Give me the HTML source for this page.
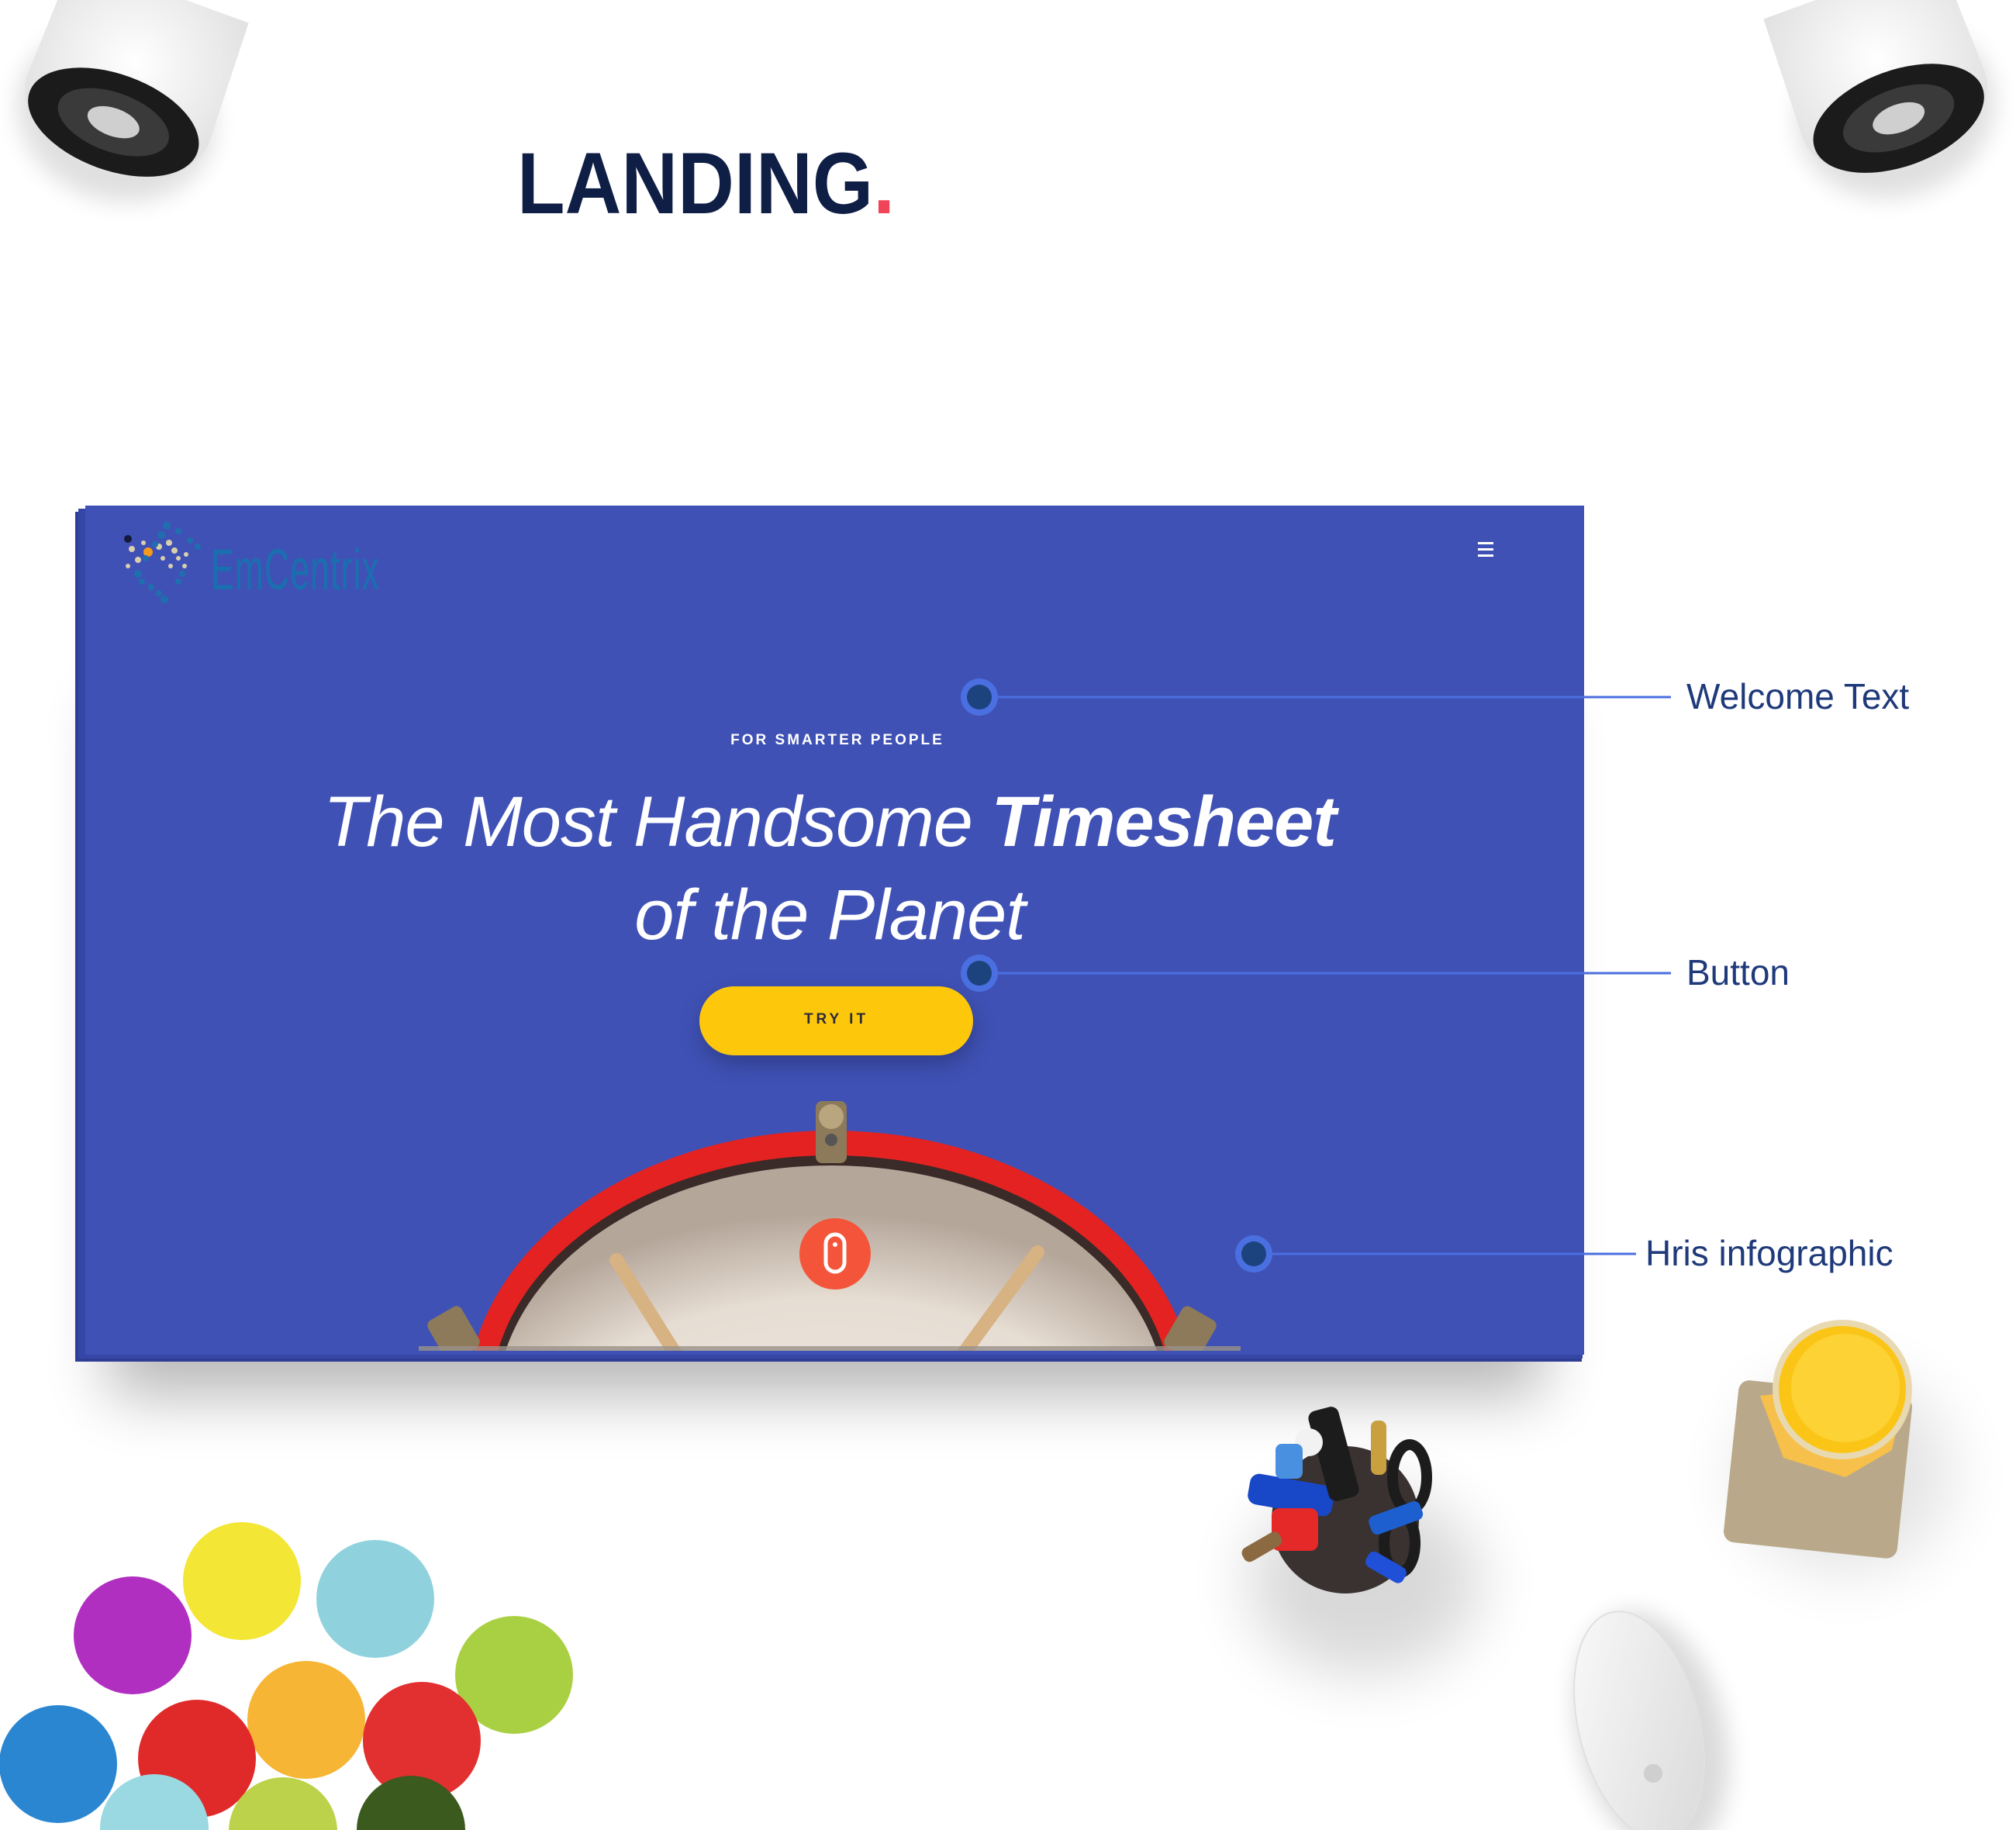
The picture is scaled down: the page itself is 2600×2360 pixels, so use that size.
<!DOCTYPE html>
<html><head><meta charset="utf-8"><style>
html,body{margin:0;padding:0;background:#fff;}
body{width:2600px;height:2360px;position:relative;overflow:hidden;font-family:"Liberation Sans",sans-serif;}
.abs{position:absolute;}
</style></head><body>
<svg class="abs" style="left:0;top:0" width="2600" height="2360" viewBox="0 0 2600 2360">
<defs>
<filter id="blur40" x="-50%" y="-50%" width="200%" height="200%"><feGaussianBlur stdDeviation="40"/></filter>
<filter id="blur15" x="-50%" y="-50%" width="200%" height="200%"><feGaussianBlur stdDeviation="15"/></filter>
<radialGradient id="head" cx="50%" cy="80%" r="70%"><stop offset="0" stop-color="#f3efe8"/><stop offset="0.75" stop-color="#e6ddd3"/><stop offset="1" stop-color="#b5a69a"/></radialGradient>
<radialGradient id="spk" cx="50%" cy="40%" r="60%"><stop offset="0" stop-color="#fff"/><stop offset="1" stop-color="#e2e2e2"/></radialGradient>
<linearGradient id="mouse" x1="0" y1="0" x2="1" y2="1"><stop offset="0" stop-color="#fbfbfb"/><stop offset="1" stop-color="#d8d8d8"/></linearGradient>
</defs>
<rect x="140" y="900" width="1850" height="900" fill="#000" opacity="0.28" filter="url(#blur40)"/>
<g transform="translate(160,120) rotate(20)">
 <ellipse cx="0" cy="30" rx="130" ry="110" fill="#000" opacity="0.12" filter="url(#blur15)"/>
 <path d="M-120,-140 L120,-140 L125,20 A125,85 0 0 1 -125,20 Z" fill="url(#spk)"/>
 <ellipse cx="0" cy="40" rx="115" ry="62" fill="#1b1b1b"/>
 <ellipse cx="0" cy="40" rx="75" ry="38" fill="#3a3a3a"/>
 <ellipse cx="0" cy="40" rx="35" ry="18" fill="#cfcfcf"/>
</g>
<g transform="translate(2435,115) rotate(-20)">
 <ellipse cx="0" cy="30" rx="130" ry="110" fill="#000" opacity="0.12" filter="url(#blur15)"/>
 <path d="M-120,-140 L120,-140 L125,20 A125,85 0 0 1 -125,20 Z" fill="url(#spk)"/>
 <ellipse cx="0" cy="40" rx="115" ry="62" fill="#1b1b1b"/>
 <ellipse cx="0" cy="40" rx="75" ry="38" fill="#3a3a3a"/>
 <ellipse cx="0" cy="40" rx="35" ry="18" fill="#cfcfcf"/>
</g>
<rect x="97" y="660" width="1943" height="1096" fill="#2f3e95"/>
<rect x="101" y="656" width="1940" height="1096" fill="#3646a6"/>
<rect x="110" y="652" width="1933" height="1095" fill="#3f51b5"/>
<clipPath id="pc"><rect x="110" y="652" width="1933" height="1090"/></clipPath>
<g clip-path="url(#pc)">
 <ellipse cx="1072" cy="1810" rx="470" ry="352" fill="#e52222"/>
 <ellipse cx="1072" cy="1810" rx="440" ry="320" fill="#3a2a28"/>
 <ellipse cx="1072" cy="1815" rx="432" ry="312" fill="url(#head)"/>
 <line x1="795" y1="1625" x2="880" y2="1760" stroke="#d7b283" stroke-width="18" stroke-linecap="round"/>
 <line x1="1338" y1="1615" x2="1232" y2="1760" stroke="#d7b283" stroke-width="18" stroke-linecap="round"/>
 <rect x="1052" y="1420" width="40" height="80" rx="8" fill="#8c7a5a"/>
 <circle cx="1072" cy="1440" r="16" fill="#b9a57e"/>
 <circle cx="1072" cy="1470" r="8" fill="#555"/>
 <rect x="560" y="1690" width="50" height="60" rx="8" fill="#8c7a5a" transform="rotate(-30 585 1720)"/>
 <rect x="1510" y="1690" width="50" height="60" rx="8" fill="#8c7a5a" transform="rotate(30 1535 1720)"/>
 <rect x="540" y="1736" width="1060" height="10" fill="#9a918a" opacity="0.8"/>
</g>
<circle cx="1077" cy="1617" r="46" fill="#f4553a"/>
<rect x="1065" y="1592" width="24" height="48" rx="12" fill="none" stroke="#fff" stroke-width="5"/>
<circle cx="1077" cy="1605" r="3" fill="#fff"/>
<rect x="905" y="1285" width="350" height="86" rx="43" fill="#000" opacity="0.25" filter="url(#blur15)"/>
<rect x="902" y="1272" width="353" height="89" rx="44.5" fill="#fdc80b"/>
<g stroke="#4a6fe0" stroke-width="3">
 <line x1="1263" y1="899" x2="2155" y2="899"/>
 <line x1="1263" y1="1255" x2="2155" y2="1255"/>
 <line x1="1617" y1="1617" x2="2110" y2="1617"/>
</g>
<g>
 <circle cx="1263" cy="899" r="24" fill="#4a6fe0"/><circle cx="1263" cy="899" r="16" fill="#1d437e"/>
 <circle cx="1263" cy="1255" r="24" fill="#4a6fe0"/><circle cx="1263" cy="1255" r="16" fill="#1d437e"/>
 <circle cx="1617" cy="1617" r="24" fill="#4a6fe0"/><circle cx="1617" cy="1617" r="16" fill="#1d437e"/>
</g>
<g fill="#fff"><rect x="1906" y="699" width="20" height="3"/><rect x="1906" y="707" width="20" height="3"/><rect x="1906" y="715" width="20" height="3"/></g>
<g>
 <circle cx="165" cy="695" r="5" fill="#14193a"/>
 <circle cx="191" cy="712" r="6" fill="#f39a1d"/>
 <g fill="#d9cfae"><circle cx="170" cy="708" r="4"/><circle cx="178" cy="722" r="4"/><circle cx="165" cy="730" r="3"/><circle cx="205" cy="705" r="4"/><circle cx="218" cy="700" r="4"/><circle cx="225" cy="710" r="4"/><circle cx="210" cy="720" r="3"/><circle cx="230" cy="720" r="3"/><circle cx="220" cy="730" r="3"/><circle cx="185" cy="700" r="3"/><circle cx="240" cy="715" r="3"/><circle cx="238" cy="730" r="3"/></g>
 <g fill="#1f6fb0"><circle cx="215" cy="678" r="5"/><circle cx="208" cy="690" r="5"/><circle cx="200" cy="702" r="4"/><circle cx="188" cy="720" r="4"/><circle cx="178" cy="740" r="5"/><circle cx="183" cy="750" r="4"/><circle cx="195" cy="757" r="4"/><circle cx="205" cy="765" r="4"/><circle cx="212" cy="773" r="5"/><circle cx="230" cy="685" r="4"/><circle cx="245" cy="697" r="4"/><circle cx="255" cy="705" r="4"/><circle cx="235" cy="740" r="4"/><circle cx="230" cy="750" r="4"/></g>
</g>
<ellipse cx="1760" cy="2040" rx="150" ry="120" fill="#000" opacity="0.15" filter="url(#blur40)"/>
<circle cx="1735" cy="1960" r="95" fill="#3a3230"/>
<rect x="1610" y="1908" width="110" height="40" rx="12" fill="#1847c8" transform="rotate(10 1665 1928)"/>
<rect x="1640" y="1945" width="60" height="55" rx="10" fill="#e52828"/>
<rect x="1700" y="1815" width="40" height="120" rx="10" fill="#1c1c1c" transform="rotate(-15 1720 1875)"/>
<circle cx="1688" cy="1860" r="18" fill="#f2f2f2"/>
<rect x="1645" y="1862" width="35" height="45" rx="8" fill="#4a90e0"/>
<rect x="1768" y="1832" width="20" height="70" rx="8" fill="#c9a040"/>
<ellipse cx="1818" cy="1905" rx="22" ry="42" fill="none" stroke="#1c1c1c" stroke-width="14"/>
<ellipse cx="1805" cy="1990" rx="20" ry="38" fill="none" stroke="#1c1c1c" stroke-width="14"/>
<rect x="1765" y="1945" width="70" height="25" rx="8" fill="#1e5fd0" transform="rotate(-20 1800 1957)"/>
<rect x="1760" y="2010" width="55" height="22" rx="8" fill="#2050d8" transform="rotate(30 1787 2021)"/>
<rect x="1600" y="1985" width="55" height="20" rx="8" fill="#8b6a42" transform="rotate(-30 1627 1995)"/>
<ellipse cx="2380" cy="1900" rx="140" ry="130" fill="#000" opacity="0.1" filter="url(#blur40)"/>
<rect x="2232" y="1790" width="225" height="210" rx="14" fill="#b9a98a" transform="rotate(6 2345 1895)"/>
<path d="M2270,1800 L2300,1880 L2380,1905 L2440,1870 L2460,1780 Z" fill="#f7c04a"/>
<circle cx="2376" cy="1792" r="90" fill="#e8d9b0"/>
<circle cx="2376" cy="1792" r="82" fill="#fbc518"/>
<circle cx="2380" cy="1790" r="70" fill="#fdd234"/>
<ellipse cx="2130" cy="2235" rx="95" ry="160" fill="#000" opacity="0.14" filter="url(#blur15)" transform="rotate(-14 2130 2235)"/>
<ellipse cx="2114" cy="2225" rx="78" ry="150" fill="url(#mouse)" stroke="#e0e0e0" stroke-width="2" transform="rotate(-14 2114 2225)"/>
<circle cx="2132" cy="2287" r="12" fill="#cfcfcf"/>
<g>
 <circle cx="171" cy="2109" r="76" fill="#b02fc0"/>
 <circle cx="312" cy="2039" r="76" fill="#f3e635"/>
 <circle cx="484" cy="2062" r="76" fill="#8fd2dd"/>
 <circle cx="663" cy="2160" r="76" fill="#a9d042"/>
 <circle cx="395" cy="2218" r="76" fill="#f6b534"/>
 <circle cx="254" cy="2268" r="76" fill="#e02a2a"/>
 <circle cx="544" cy="2245" r="76" fill="#e22f2f"/>
 <circle cx="75" cy="2275" r="76" fill="#2a86d0"/>
 <circle cx="199" cy="2358" r="70" fill="#9ad8e2"/>
 <circle cx="365" cy="2362" r="70" fill="#bcd24a"/>
 <circle cx="530" cy="2360" r="70" fill="#3a5a1e"/>
</g>
</svg>
<div class="abs" style="left:667px;top:172px;font-size:112px;font-weight:700;color:#0f1e45;transform:scaleX(0.9);transform-origin:left top;white-space:nowrap">LANDING<span style="color:#f04458">.</span></div>
<div class="abs" style="left:272px;top:692px;font-size:74px;color:#1a6fb0;transform:scaleX(0.6);transform-origin:left top;white-space:nowrap;letter-spacing:2px">EmCentrix</div>
<div class="abs" style="left:600px;width:960px;top:944px;text-align:center;font-size:19px;font-weight:700;letter-spacing:3px;color:#fff">FOR SMARTER PEOPLE</div>
<div class="abs" style="left:290px;width:1560px;top:1000px;text-align:center;font-size:92px;line-height:120px;font-style:italic;color:#fff;letter-spacing:-1px">The Most Handsome <b>Timesheet</b><br>of the Planet</div>
<div class="abs" style="left:902px;width:353px;top:1304px;text-align:center;font-size:19px;font-weight:700;letter-spacing:4px;color:#2b2a3a">TRY IT</div>
<div class="abs" style="left:2175px;top:871px;font-size:46px;color:#1f3a7a">Welcome Text</div>
<div class="abs" style="left:2175px;top:1227px;font-size:46px;color:#1f3a7a">Button</div>
<div class="abs" style="left:2122px;top:1589px;font-size:46px;color:#1f3a7a">Hris infographic</div>
</body></html>
